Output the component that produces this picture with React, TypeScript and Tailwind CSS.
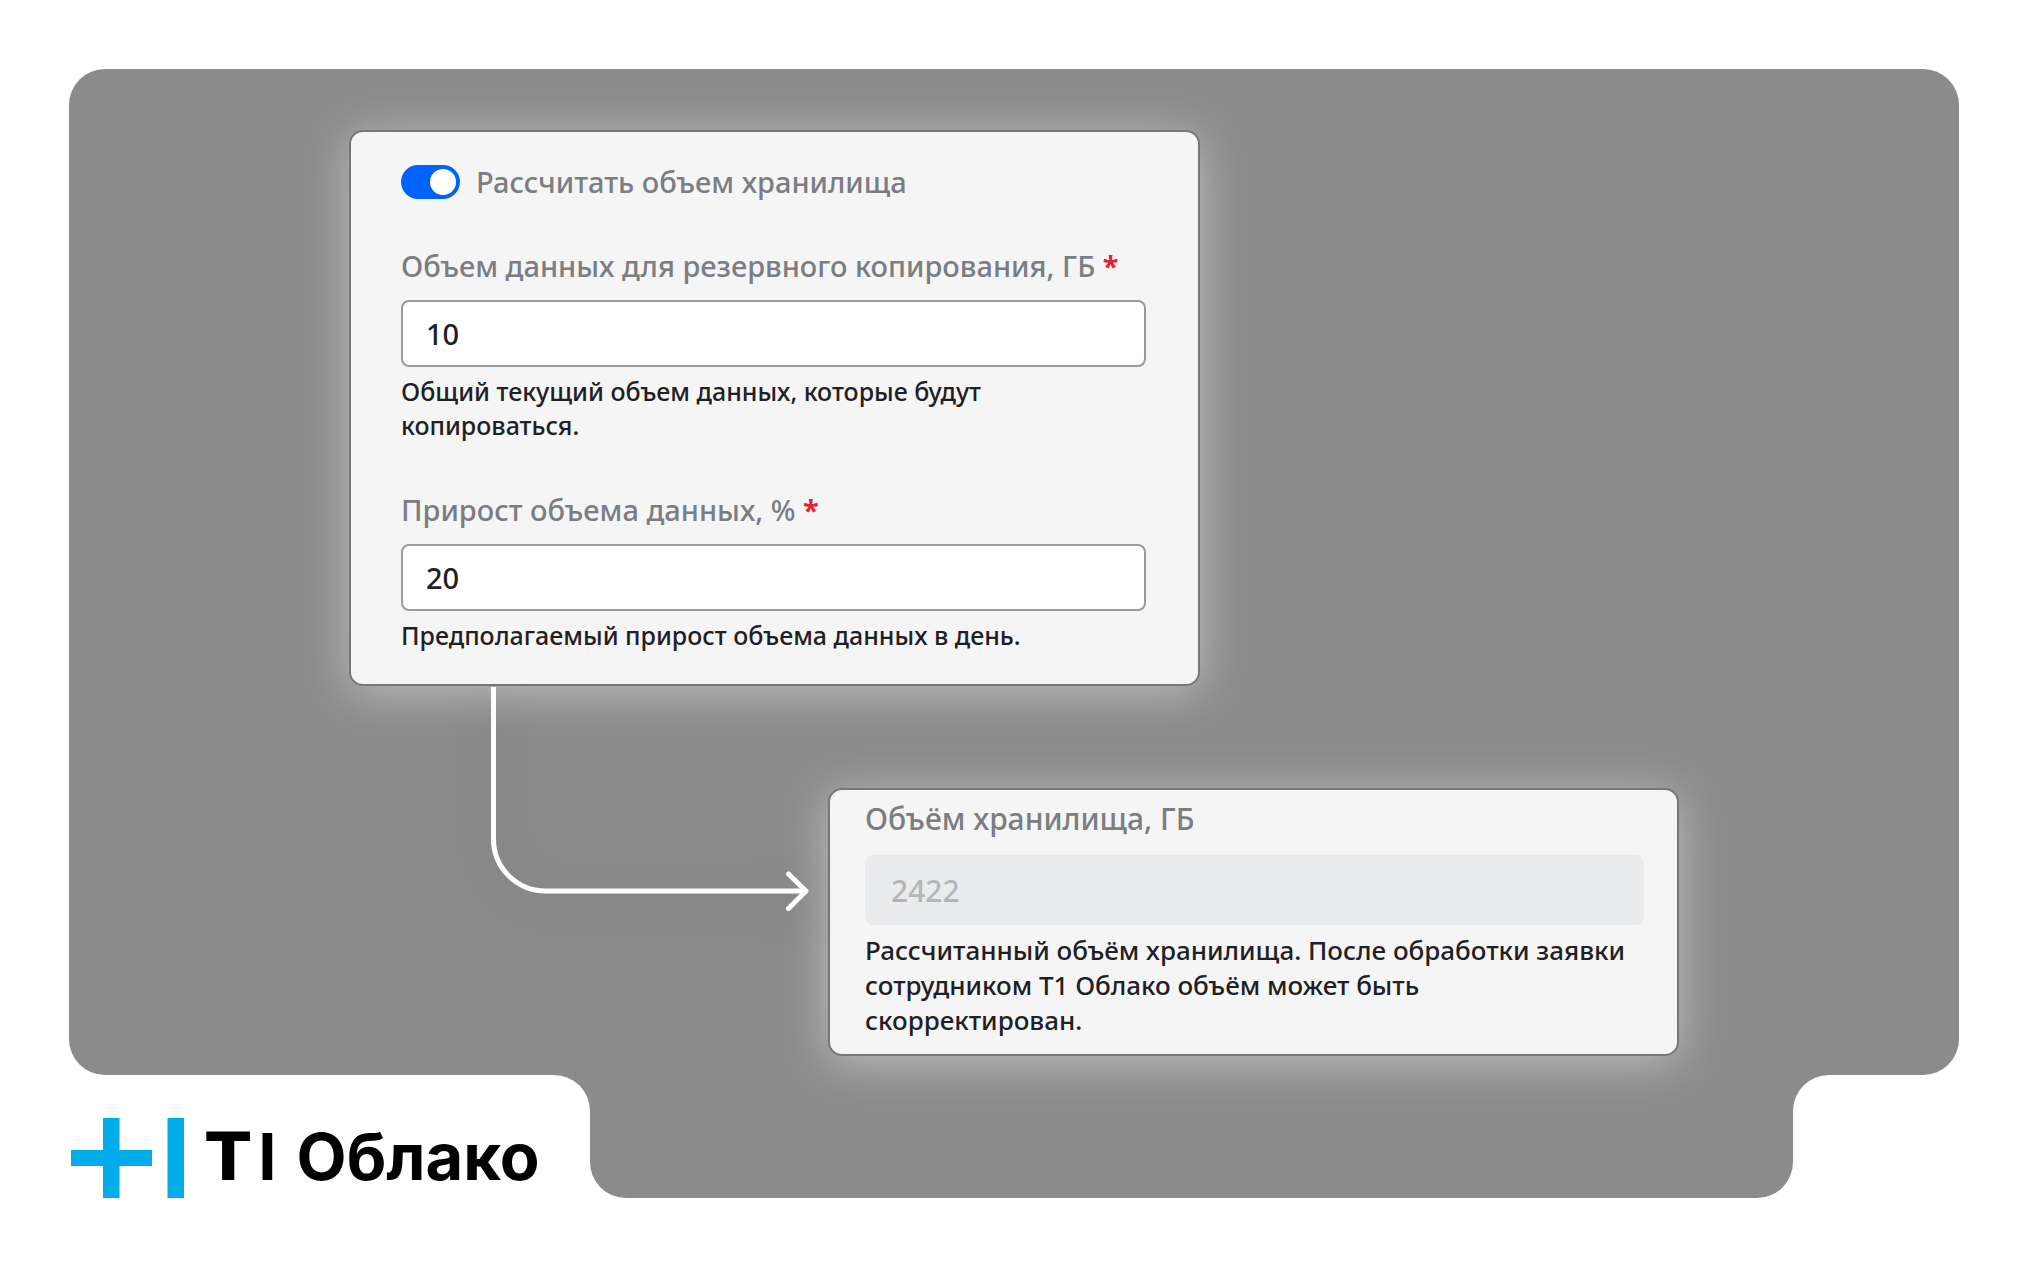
import { useState, type ReactNode } from "react";

function Card({ className, children }: { className: string; children: ReactNode }) {
  return (
    <section
      className={`rounded-[14px] border-2 border-[#777777] bg-[#f5f5f5] shadow-[0_6px_48px_rgba(255,255,255,0.45)] ${className}`}
    >
      {children}
    </section>
  );
}

function Field({
  id,
  label,
  help,
  value,
}: {
  id: string;
  label: string;
  help: string;
  value: string;
}) {
  const [text, setText] = useState(value);
  return (
    <div className="flex flex-col">
      <label htmlFor={id} className="text-[29px] leading-10 font-medium text-[#7b7d82]">
        {label} <span className="font-bold text-[#e0242f]">*</span>
      </label>
      <input
        id={id}
        value={text}
        required
        onChange={(e) => setText(e.target.value)}
        aria-describedby={`${id}-help`}
        className="mt-3.5 h-[67px] w-full rounded-lg border-2 border-[#9b9b9b] bg-white px-[23px] text-[29px] font-medium text-[#1f2024]"
      />
      <p id={`${id}-help`} className="mt-[7px] max-w-[640px] text-[25px] leading-[34px] font-medium text-[#1f2024]">
        {help}
      </p>
    </div>
  );
}

function Arrow() {
  return (
    <svg
      width="343"
      height="240"
      viewBox="0 0 343 240"
      fill="none"
      stroke="#ffffff"
      strokeWidth="5"
      aria-hidden="true"
      className="shrink-0 overflow-visible drop-shadow-[0_8px_24px_rgba(0,0,0,0.2)]"
    >
      <path d="M8.5 1V153a52 52 0 0 0 52 52H320" />
      <path d="M303.500 188L321 205L303.500 222.500" strokeLinecap="round" strokeLinejoin="round" />
    </svg>
  );
}

function Logo() {
  return (
    <div className="flex items-center gap-[22px]">
      <svg width="113" height="80" viewBox="0 0 113 80" fill="#00abe9" aria-hidden="true">
        <path d="M32 0H48.500V32H81V48H48.500V80H32V48H0V32H32Z" />
        <path d="M96.500 0H113V80H96.500Z" />
      </svg>
      <span className="flex items-baseline gap-5 font-['Inter'] text-[65px] leading-[80px] font-bold whitespace-nowrap text-black">
        <span className="flex items-baseline gap-2">
          <span className="font-['DejaVu_Sans']">T</span>
          <span>I</span>
        </span>
        <span>Облако</span>
      </span>
    </div>
  );
}

export default function App() {
  const [calculate, setCalculate] = useState(true);
  return (
    <main className="bg-white p-[69px] font-['Noto_Sans',sans-serif]">
      <div className="relative z-10 rounded-[36px] bg-[#8b8b8b] pt-[61px] pb-[19px]">
        <Card className="ml-[280px] w-[45%] pt-[28px] pr-[52px] pb-8 pl-[50px]">
          <label className="flex cursor-pointer items-center gap-4 text-[29px] leading-[44px] font-medium text-[#7b7d82]">
            <input
              type="checkbox"
              role="switch"
              checked={calculate}
              onChange={(e) => setCalculate(e.target.checked)}
              className="peer sr-only"
            />
            <span className="flex h-[34px] w-[59px] items-center rounded-full bg-[#b5b7bb] p-1 peer-checked:justify-end peer-checked:bg-[#0062ff]">
              <span className="size-[26px] rounded-full bg-white" />
            </span>
            Рассчитать объем хранилища
          </label>
          <div className="mt-[42px] flex flex-col gap-12">
            <Field
              id="volume"
              label="Объем данных для резервного копирования, ГБ"
              value="10"
              help="Общий текущий объем данных, которые будут копироваться."
            />
            <Field
              id="growth"
              label="Прирост объема данных, %"
              value="20"
              help="Предполагаемый прирост объема данных в день."
            />
          </div>
        </Card>

        <div className="flex items-start pl-[416px]">
          <Arrow />
          <Card className="mt-[102px] mr-[280px] flex-1 pt-[9px] pr-[33px] pb-4 pl-[35px]">
            <label htmlFor="storage" className="block text-[30px] leading-10 font-medium text-[#7b7d82]">
              Объём хранилища, ГБ
            </label>
            <input
              id="storage"
              value="2422"
              disabled
              aria-describedby="storage-help"
              className="mt-4 h-[70px] w-full rounded-lg bg-[#e9ebec] px-[26px] text-[30px] font-medium text-[#b4b5b7]"
            />
            <p
              id="storage-help"
              className="mt-2 max-w-[768px] text-[26px] leading-[35px] font-medium text-[#1f2024]"
            >
              Рассчитанный объём хранилища. После обработки заявки сотрудником Т1 Облако объём может быть
              скорректирован.
            </p>
          </Card>
        </div>
      </div>

      <footer className="flex h-[123px]">
        <div className="w-[521px] bg-[#8b8b8b]">
          <div className="flex h-full items-end rounded-tr-[36px] bg-white pl-0.5">
            <Logo />
          </div>
        </div>
        <div className="flex-1 rounded-b-[36px] bg-[#8b8b8b]" />
        <div className="w-[166px] bg-[#8b8b8b]">
          <div className="h-full rounded-tl-[36px] bg-white" />
        </div>
      </footer>
    </main>
  );
}
